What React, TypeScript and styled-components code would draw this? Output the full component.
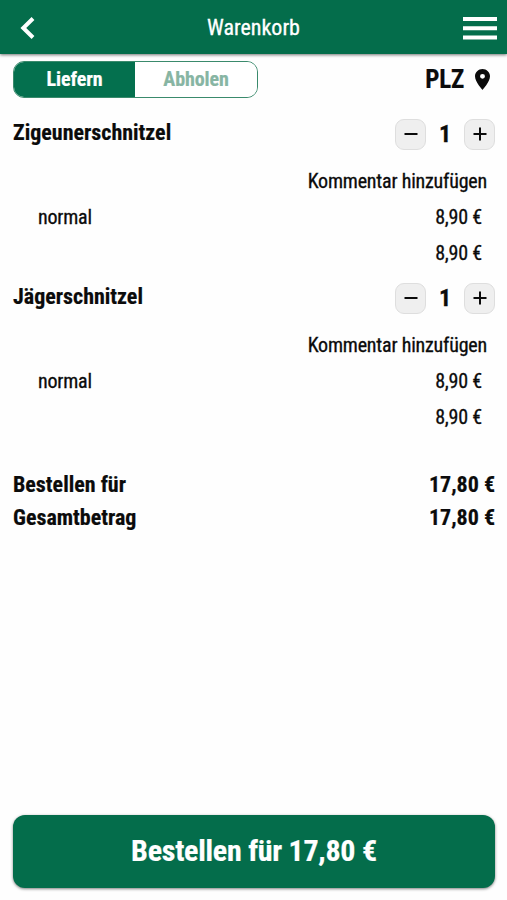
import React from 'react';
import styled, { createGlobalStyle } from 'styled-components';

const green = '#046d4b';

const GlobalStyle = createGlobalStyle`
  *, *::before, *::after { box-sizing: border-box; }
  body {
    margin: 0;
    background: #fefefe;
    color: #0b0b0b;
    font-family: "Roboto Condensed", Roboto, "Liberation Sans", sans-serif;
    font-stretch: 75%;
  }
  button { font: inherit; font-stretch: 75%; color: inherit; padding: 0; border: 0; background: none; }
`;

const Page = styled.div`
  height: 900px;
  display: flex;
  flex-direction: column;
  overflow: hidden;
`;

const Header = styled.header`
  height: 54px;
  flex: none;
  display: grid;
  grid-template-columns: 60px 1fr 60px;
  align-items: center;
  background: ${green};
  color: #fff;
  box-shadow: 0 1px 3px rgba(0, 0, 0, 0.55);
`;

const HeaderButton = styled.button<{ $end?: boolean }>`
  display: flex;
  justify-content: ${p => (p.$end ? 'flex-end' : 'flex-start')};
  padding: ${p => (p.$end ? '2px 10px 0 0' : '2px 0 0 20px')};
`;

const Title = styled.h1`
  margin: 0;
  padding-top: 2px;
  text-align: center;
  font-size: 22px;
  font-weight: 400;
  line-height: 26px;
  -webkit-text-stroke: 0.3px;
`;

const Toolbar = styled.div`
  height: 50px;
  flex: none;
  display: flex;
  justify-content: space-between;
  padding: 7px 17px 0 13px;
`;

const Segments = styled.div`
  width: 245px;
  height: 37px;
  display: flex;
  border: 1px solid #3a8a6c;
  border-radius: 11px;
  overflow: hidden;
`;

const Segment = styled.button<{ $active?: boolean }>`
  flex: ${p => (p.$active ? '0 0 121px' : '1')};
  padding-bottom: 1px;
  font-size: 20px;
  font-weight: 700;
  letter-spacing: -0.1px;
  color: ${p => (p.$active ? '#fff' : '#87b5a3')};
  background: ${p => (p.$active ? '#04704e' : '#fff')};
  -webkit-text-stroke: 0.2px;
`;

const Postcode = styled.button`
  height: 36px;
  display: flex;
  align-items: center;
  gap: 11px;
  font-size: 25px;
  font-weight: 700;
  letter-spacing: -0.2px;
  -webkit-text-stroke: 0.2px;
`;

const Item = styled.section`
  height: 164px;
  flex: none;
  padding: 14px 12px 0 13px;
`;

const ItemHead = styled.div`
  height: 32px;
  display: flex;
  justify-content: space-between;
  align-items: center;
`;

const ItemName = styled.h2`
  margin: 0;
  padding-bottom: 3px;
  font-size: 22px;
  font-weight: 700;
  line-height: 26px;
  -webkit-text-stroke: 0.2px;
`;

const Stepper = styled.div`
  width: 100px;
  display: grid;
  grid-template-columns: 31px 1fr 31px;
  align-items: center;
`;

const StepButton = styled.button`
  height: 31px;
  display: grid;
  place-items: center;
  border: 1px solid #dedede;
  border-radius: 9px;
  background: #efefef;
`;

const Quantity = styled.span`
  text-align: center;
  font-size: 24px;
  font-weight: 700;
  line-height: 30px;
  -webkit-text-stroke: 0.3px;
`;

const Comment = styled.button`
  display: block;
  margin: 19px 8px 0 auto;
  font-size: 20px;
  line-height: 24px;
  letter-spacing: -0.2px;
  -webkit-text-stroke: 0.3px;
`;

const Line = styled.div`
  display: flex;
  justify-content: space-between;
  margin-top: 12px;
  padding: 0 13px 0 25px;
  font-size: 20px;
  line-height: 24px;
  letter-spacing: -0.2px;
  -webkit-text-stroke: 0.3px;
`;

const Totals = styled.dl`
  margin: 36px 0 0;
  padding: 0 12px 0 13px;
  font-size: 22px;
  font-weight: 700;
  line-height: 33px;
  -webkit-text-stroke: 0.2px;
`;

const TotalRow = styled.div`
  display: flex;
  justify-content: space-between;
  dt, dd { margin: 0; }
`;

const OrderButton = styled.button`
  height: 73px;
  flex: none;
  margin: auto 12px 12px 13px;
  padding-bottom: 2px;
  border-radius: 12px;
  background: ${green};
  color: #fff;
  font-size: 30px;
  font-weight: 700;
  letter-spacing: -0.25px;
  -webkit-text-stroke: 0.2px;
  box-shadow: 0 1px 3px rgba(0, 0, 0, 0.5);
`;

const items = [
  { name: 'Zigeunerschnitzel', option: 'normal', price: '8,90 €', sum: '8,90 €' },
  { name: 'Jägerschnitzel', option: 'normal', price: '8,90 €', sum: '8,90 €' },
];

const Sign = ({ plus }: { plus?: boolean }) => (
  <svg width="14" height="14" viewBox="0 0 14 14" stroke="#0b0b0b" strokeWidth="2">
    <path d={plus ? 'M.5 7h13M7 .5v13' : 'M.5 7h13'} />
  </svg>
);

export default function App() {
  return (
    <>
      <GlobalStyle />
      <Page>
        <Header>
          <HeaderButton aria-label="Zurück">
            <svg width="16" height="22" viewBox="0 0 16 22" fill="none" stroke="#fff" strokeWidth="4">
              <path d="M13 1.5 3.3 11l9.7 9.5" />
            </svg>
          </HeaderButton>
          <Title>Warenkorb</Title>
          <HeaderButton $end aria-label="Menü">
            <svg width="34" height="23" viewBox="0 0 34 23" fill="#fff">
              <path d="M0 0h34v4H0zM0 9.2h34v4H0zM0 18.5h34v4H0z" />
            </svg>
          </HeaderButton>
        </Header>
        <Toolbar>
          <Segments>
            <Segment $active>Liefern</Segment>
            <Segment>Abholen</Segment>
          </Segments>
          <Postcode>
            PLZ
            <svg width="15" height="21" viewBox="5 2 14 20" preserveAspectRatio="none" fill="#0b0b0b">
              <path d="M12 2C8.13 2 5 5.13 5 9c0 5.25 7 13 7 13s7-7.75 7-13c0-3.87-3.13-7-7-7zm0 9.3a2.3 2.3 0 0 1 0-4.6 2.3 2.3 0 0 1 0 4.6z" />
            </svg>
          </Postcode>
        </Toolbar>
        {items.map(item => (
          <Item key={item.name}>
            <ItemHead>
              <ItemName>{item.name}</ItemName>
              <Stepper>
                <StepButton aria-label="Weniger"><Sign /></StepButton>
                <Quantity>1</Quantity>
                <StepButton aria-label="Mehr"><Sign plus /></StepButton>
              </Stepper>
            </ItemHead>
            <Comment>Kommentar hinzufügen</Comment>
            <Line><span>{item.option}</span><span>{item.price}</span></Line>
            <Line><span /><span>{item.sum}</span></Line>
          </Item>
        ))}
        <Totals>
          <TotalRow><dt>Bestellen für</dt><dd>17,80 €</dd></TotalRow>
          <TotalRow><dt>Gesamtbetrag</dt><dd>17,80 €</dd></TotalRow>
        </Totals>
        <OrderButton>Bestellen für 17,80 €</OrderButton>
      </Page>
    </>
  );
}
